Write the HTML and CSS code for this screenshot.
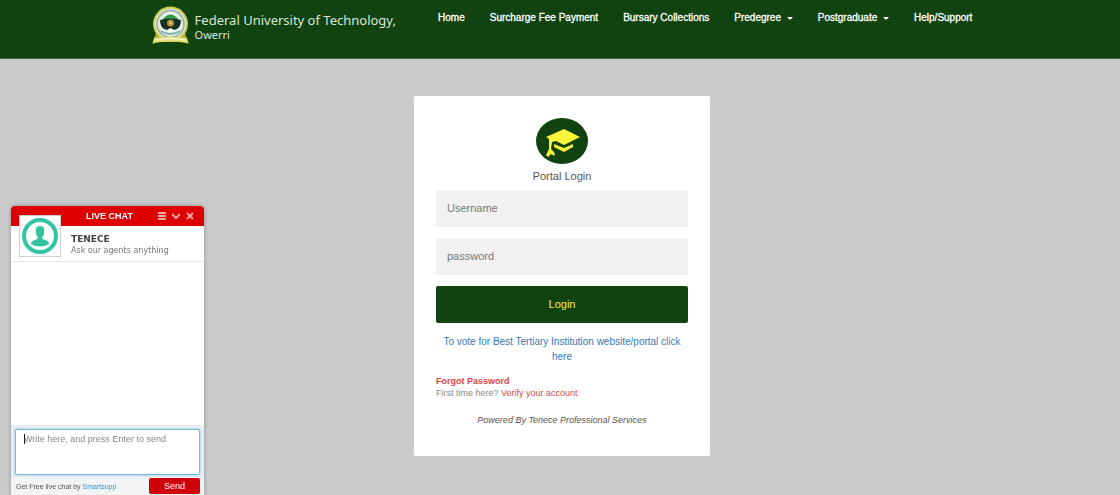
FILE: index.html
```
<!DOCTYPE html>
<html lang="en">
<head>
  <meta charset="UTF-8">
  <meta name="viewport" content="width=device-width, initial-scale=1.0">
  <title>Portal Login</title>
  <link rel="stylesheet" href="styles.css">
</head>
<body>
  <header class="navbar">
    <a class="brand" href="#">
      <svg class="brand-logo" viewBox="0 0 37 40" aria-hidden="true">
        <path d="M4 27 L0 38 L6 36 H31 L37 38 L33 27 Z" fill="#a9a832"/>
        <circle cx="18.500" cy="18" r="17.500" fill="#cfcb4c"/>
        <circle cx="18.500" cy="18" r="15.500" fill="#dfe8dc"/>
        <circle cx="18.500" cy="18" r="13.500" fill="none" stroke="#8fae9b" stroke-width="1.500"/>
        <circle cx="18.500" cy="18" r="11" fill="#f0f5ee"/>
        <path d="M10 14 Q18.500 3 27 14 Z" fill="#2f9a48"/>
        <path d="M8 14 Q18 11 29 14 Q29 23 22 24 L18.500 22 L15 24 Q8 23 8 14 Z" fill="#14301f"/>
        <circle cx="18.500" cy="17" r="3.500" fill="#b98f35"/>
        <circle cx="18.500" cy="17" r="1.500" fill="#e0c35a"/>
        <path d="M9 25 Q18.500 31 28 25" fill="none" stroke="#7fb5b4" stroke-width="2"/>
        <path d="M2 32 Q18.500 29 35 32 L36 37 Q18.500 34 1 37 Z" fill="#e2df6c"/>
        <path d="M4 34 Q18.500 31 33 34" fill="none" stroke="#f7f6d8" stroke-width="1.500"/>
      </svg>
      <span class="brand-text">
        <span class="brand-name">Federal University of Technology,</span>
        <span class="brand-place">Owerri</span>
      </span>
    </a>
    <nav class="nav-links">
      <a href="#">Home</a>
      <a href="#">Surcharge Fee Payment</a>
      <a href="#">Bursary Collections</a>
      <a href="#">Predegree <span class="caret"></span></a>
      <a href="#">Postgraduate <span class="caret"></span></a>
      <a href="#">Help/Support</a>
    </nav>
  </header>

  <main class="page">
    <form class="login-card">
      <svg class="login-icon" viewBox="0 0 52 46" aria-hidden="true">
        <ellipse cx="26" cy="23" rx="26" ry="23" fill="#10430f"/>
        <path d="M10 19 L28 11 L44 19 L28 27 L20 23 L16 24 L15 31 L18 34 L19 38 L15 36 L12 39 L10 37 L13 31 L13 21 Z" fill="#fbf43a"/>
        <path d="M18 26 L28 30 L37 26 V29 L28 34 L18 29 Z" fill="#fbf43a"/>
      </svg>
      <h1 class="login-title">Portal Login</h1>
      <input class="login-input" type="text" placeholder="Username" aria-label="Username">
      <input class="login-input" type="password" placeholder="password" aria-label="Password">
      <button class="login-btn" type="submit">Login</button>
      <a class="vote-link" href="#">To vote for Best Tertiary Institution website/portal click here</a>
      <div class="help">
        <a class="forgot" href="#">Forgot Password</a>
        <p>First time here? <a href="#">Verify your account</a></p>
      </div>
      <p class="powered">Powered By Tenece Professional Services</p>
    </form>
  </main>

  <section class="chat">
    <div class="chat-header">
      <span class="chat-title">LIVE CHAT</span>
      <button class="chat-tool" type="button" aria-label="Menu">
        <svg viewBox="0 0 8 8"><path d="M0 1 H8 M0 4 H8 M0 7 H8"/></svg>
      </button>
      <button class="chat-tool" type="button" aria-label="Minimize">
        <svg viewBox="0 0 8 8"><path d="M0 2 L4 6 L8 2"/></svg>
      </button>
      <button class="chat-tool" type="button" aria-label="Close">
        <svg viewBox="0 0 8 8"><path d="M1 1 L7 7 M7 1 L1 7"/></svg>
      </button>
    </div>
    <div class="chat-agent">
      <div class="avatar">
        <svg viewBox="0 0 38 38" aria-hidden="true">
          <circle cx="19" cy="19" r="16" fill="#fff" stroke="#31c4a2" stroke-width="4"/>
          <path d="M19 9 C23 9 24 12 23 16 C23 19 21 20 21 21 C22 23 28 23 28 27 Q19 32 10 27 C10 23 16 23 17 21 C17 20 15 19 15 16 C14 12 15 9 19 9 Z" fill="#31c4a2"/>
        </svg>
      </div>
      <div class="agent-text">
        <strong class="agent-name">TENECE</strong>
        <span>Ask our agents anything</span>
      </div>
    </div>
    <div class="chat-messages"></div>
    <div class="chat-write">
      <textarea class="chat-input" placeholder="Write here, and press Enter to send" aria-label="Message"></textarea>
      <span class="cursor"></span>
    </div>
    <div class="chat-footer">
      <span>Get Free live chat by <a href="#">Smartsupp</a></span>
      <button class="send-btn" type="button">Send</button>
    </div>
  </section>
</body>
</html>
```
FILE: styles.css
```
* {
  box-sizing: border-box;
}
body {
  margin: 0;
  min-height: 100vh;
  background: #cbcbcb;
  font-family: "Liberation Sans", Arial, sans-serif;
  font-size: 11px;
  color: #555;
}
a {
  text-decoration: none;
}
p {
  margin: 0;
}
button,
input,
textarea {
  font-family: inherit;
}
.navbar {
  display: flex;
  justify-content: space-between;
  align-items: flex-start;
  height: 59px;
  padding: 6px 13% 0;
  background: #10430f;
  border-bottom: 1px solid #3f633e;
}
.brand {
  display: flex;
  gap: 6px;
  margin-left: 6px;
  color: #dbe6da;
  font-family: "Noto Sans", sans-serif;
}
.brand-logo {
  width: 37px;
  height: 40px;
}
.brand-text {
  display: flex;
  flex-direction: column;
  padding-top: 6px;
}
.brand-name {
  font-size: 13px;
  line-height: 16px;
}
.brand-place {
  font-size: 11px;
  line-height: 13px;
}
.nav-links {
  display: flex;
  gap: 25px;
  padding: 5px 2px 0 0;
  font-size: 10px;
}
.nav-links a {
  color: #fff;
  line-height: 14px;
  white-space: nowrap;
  -webkit-text-stroke: 0.3px #fff;
}
.caret {
  display: inline-block;
  margin-left: 3px;
  vertical-align: middle;
  border-top: 3px solid #fff;
  border-left: 3px solid transparent;
  border-right: 3px solid transparent;
}
.page {
  display: flex;
  justify-content: center;
  padding: 37px 0 39px 4px;
}
.login-card {
  display: flex;
  flex-direction: column;
  width: 296px;
  padding: 22px 22px 30px;
  background: #fff;
  border-radius: 2px;
  text-align: center;
}
.login-icon {
  width: 52px;
  height: 46px;
  margin: 0 auto;
}
.login-title {
  margin: 5px 0 6px;
  font-size: 11px;
  line-height: 15px;
  font-weight: normal;
}
.login-input {
  width: 100%;
  height: 37px;
  margin-bottom: 11px;
  padding: 0 11px 2px;
  border: none;
  outline: none;
  background: #f1f1f1;
  font-size: 11px;
}
.login-input::placeholder {
  color: #777;
}
.login-btn {
  height: 37px;
  margin-bottom: 11px;
  padding: 0 0 2px;
  border: none;
  border-radius: 2px;
  background: #10430f;
  color: #f3f04b;
  font-size: 11px;
  cursor: pointer;
}
.vote-link {
  color: #337ab7;
  font-size: 10px;
  line-height: 15px;
}
.help {
  margin-top: 11px;
  font-size: 9px;
  line-height: 12px;
  text-align: left;
  color: #888;
}
.help a {
  color: #dc4444;
}
.help .forgot {
  font-weight: bold;
}
.powered {
  margin-top: 15px;
  font-size: 9px;
  line-height: 12px;
  font-style: italic;
}
.chat {
  position: fixed;
  left: 11px;
  bottom: 0;
  width: 193px;
  background: #fff;
  border-radius: 4px 4px 0 0;
  box-shadow: 0 0 4px rgba(0, 0, 0, 0.3);
  font-size: 9px;
}
.chat-header {
  display: flex;
  align-items: center;
  gap: 6px;
  height: 20px;
  padding-right: 10px;
  background: #dc0000;
  border-radius: 4px 4px 0 0;
}
.chat-title {
  flex: 1;
  padding-left: 56px;
  text-align: center;
  color: #fff;
  font-weight: bold;
}
.chat-tool {
  width: 8px;
  height: 8px;
  padding: 0;
  border: none;
  background: none;
}
.chat-tool svg {
  display: block;
  fill: none;
  stroke: #f4a3a3;
  stroke-width: 2;
}
.chat-agent {
  display: flex;
  gap: 10px;
  height: 36px;
  padding: 0 8px;
  border-bottom: 1px solid #e6e6e6;
}
.avatar {
  width: 42px;
  height: 42px;
  margin-top: -11px;
  padding: 1px;
  background: #fff;
  border: 1px solid #ccc;
}
.avatar svg {
  display: block;
}
.agent-text {
  display: flex;
  flex-direction: column;
  padding-top: 8px;
  font-family: "DejaVu Sans", Verdana, sans-serif;
  font-size: 8px;
  line-height: 11px;
  color: #777;
}
.agent-name {
  font-size: 9px;
  color: #444;
}
.chat-messages {
  height: 163px;
}
.chat-write {
  position: relative;
  padding: 4px 4px 2px;
  background: #e3edf4;
}
.chat-input {
  display: block;
  width: 100%;
  height: 46px;
  padding: 4px 8px;
  border: 1px solid #7db8dc;
  border-radius: 2px;
  outline: none;
  resize: none;
  box-shadow: 0 0 2px #7db8dc;
  font-size: 9px;
  line-height: 11px;
}
.chat-input::placeholder {
  color: #888;
}
.cursor {
  position: absolute;
  left: 13px;
  top: 9px;
  width: 1px;
  height: 10px;
  background: #222;
}
.chat-footer {
  display: flex;
  justify-content: space-between;
  align-items: center;
  height: 18px;
  padding: 0 4px 0 5px;
  background: #f1f3f5;
  font-size: 7px;
}
.chat-footer a {
  color: #2f96cf;
}
.send-btn {
  width: 51px;
  height: 16px;
  padding: 0;
  border: none;
  border-radius: 2px;
  background: #d0000a;
  color: #fff;
  font-size: 9px;
}
```
